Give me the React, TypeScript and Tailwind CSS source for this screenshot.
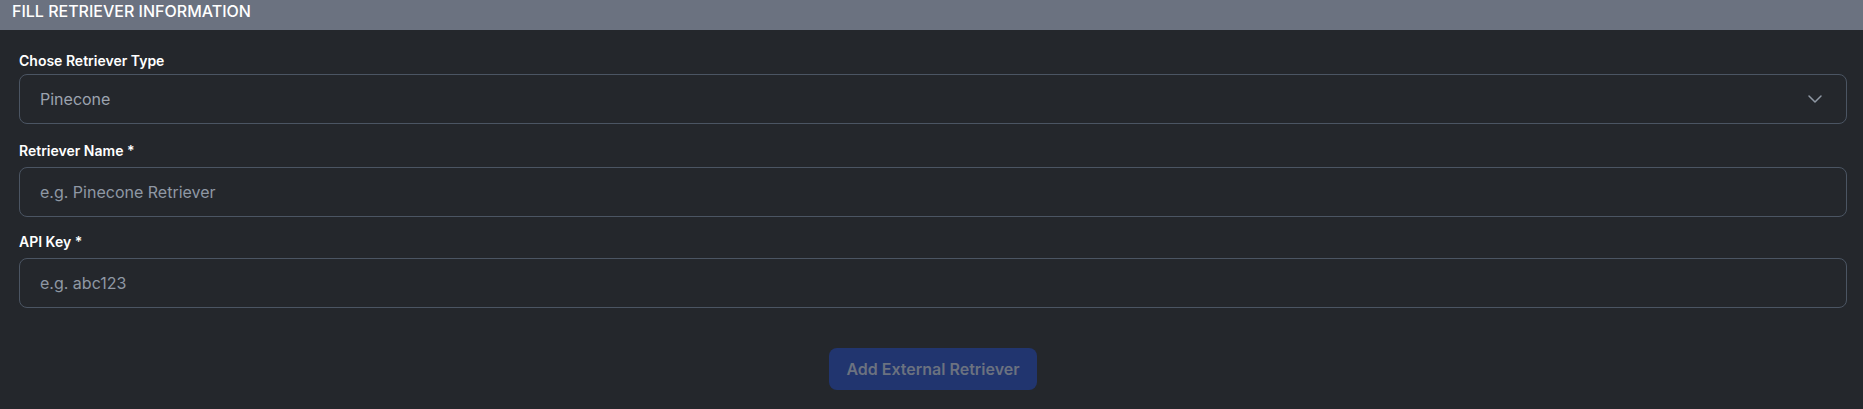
import React from "react";

function Field({
  label,
  placeholder,
  labelGap,
}: {
  label: string;
  placeholder: string;
  labelGap: string;
}) {
  return (
    <div className="flex flex-col">
      <label className={`text-[14px] font-semibold leading-5 text-white ${labelGap}`}>{label}</label>
      <input
        className="h-[50px] w-full rounded-lg border border-[#4b5563] bg-transparent px-5 text-[16px] text-[#9ca3af] placeholder:text-[#8f98a4] outline-none"
        placeholder={placeholder}
      />
    </div>
  );
}

export default function App() {
  return (
    <div className="w-[1863px] h-[409px] bg-[#24272c]" style={{ fontFamily: "Inter, 'Noto Sans', sans-serif" }}>
      <div className="h-[30px] bg-[#6b7280] px-3">
        <div className="text-[16px] font-medium leading-[22px] text-white uppercase">Fill Retriever Information</div>
      </div>
      <div className="pl-[19px] pr-[16px] pt-[21px]">
        <div className="flex flex-col">
          <label className="text-[14px] font-semibold leading-5 text-white mb-[3px]">Chose Retriever Type</label>
          <div className="flex h-[50px] w-full items-center justify-between rounded-lg border border-[#4b5563] pl-5 pr-[19px]">
            <span className="text-[16px] text-[#9ca3af]">Pinecone</span>
            <svg width="24" height="24" viewBox="0 0 24 24" fill="none" stroke="#8f98a4" strokeWidth="1.5" strokeLinecap="round" strokeLinejoin="round">
              <path d="M6 9l6 6 6-6" />
            </svg>
          </div>
        </div>
        <div className="mt-[17px]">
          <Field label="Retriever Name *" placeholder="e.g. Pinecone Retriever" labelGap="mb-[6px]" />
        </div>
        <div className="mt-[15px]">
          <Field label="API Key *" placeholder="e.g. abc123" labelGap="mb-[6px]" />
        </div>
        <div className="mt-[40px] flex justify-center">
          <button className="h-[42px] w-[208px] rounded-lg bg-[#21356f] text-[16px] font-semibold text-[#6b7280]">
            Add External Retriever
          </button>
        </div>
      </div>
    </div>
  );
}
